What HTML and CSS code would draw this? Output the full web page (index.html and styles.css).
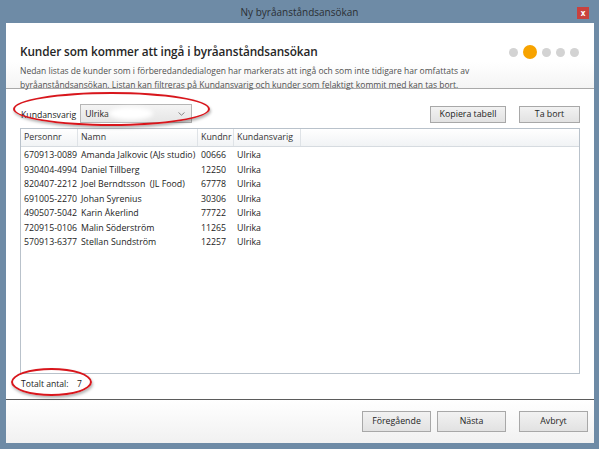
FILE: index.html
```html
<!DOCTYPE html>
<html>
	<head>
		<meta charset="utf-8" />
		<title>Ny byråanståndsansökan</title>
		<link rel="stylesheet" href="styles.css">
	</head>
	<body>
		<div class="window">
			<div class="titlebar">
				<div class="title">Ny byråanståndsansökan</div>
				<div class="close-button">x</div>
			</div>
			<div class="client">
				<div class="header">
					<div class="header-text">
						<h1 class="heading">Kunder som kommer att ingå i byråanståndsansökan</h1>
						<p class="description">Nedan listas de kunder som i förberedandedialogen har markerats att ingå och som inte tidigare har omfattats av<br>byråanståndsansökan. Listan kan filtreras på Kundansvarig och kunder som felaktigt kommit med kan tas bort.</p>
					</div>
					<div class="steps">
						<span class="dot"></span>
						<span class="dot active"></span>
						<span class="dot"></span>
						<span class="dot"></span>
						<span class="dot"></span>
					</div>
				</div>
				<div class="content">
					<div class="toolbar">
						<div class="filter">
							<span class="filter-label">Kundansvarig</span>
							<div class="combobox">
								<span class="combo-text">Ulrika</span>
								<span class="blur-patch"></span>
								<svg class="combo-arrow" width="7" height="4" viewBox="0 0 7 4"><path d="M0.5 0.5 L3.5 3.2 L6.5 0.5" fill="none" stroke="#888" stroke-width="1"/></svg>
							</div>
							<span class="mark mark-filter"></span>
						</div>
						<div class="spacer"></div>
						<div class="buttons wide">Kopiera tabell</div>
						<div class="buttons">Ta bort</div>
					</div>
					<div class="grid">
						<div class="grid-head">
							<div class="col c1">Personnr</div>
							<div class="col c2">Namn</div>
							<div class="col c3">Kundnr</div>
							<div class="col c4">Kundansvarig</div>
						</div>
						<div class="grid-rows">
							<div class="row"><span class="c1">670913-0089</span><span class="c2">Amanda Jalkovic (AJs studio)</span><span class="c3">00666</span><span class="c4">Ulrika</span></div>
							<div class="row"><span class="c1">930404-4994</span><span class="c2">Daniel Tillberg</span><span class="c3">12250</span><span class="c4">Ulrika</span></div>
							<div class="row"><span class="c1">820407-2212</span><span class="c2">Joel Berndtsson &nbsp;(JL Food)</span><span class="c3">67778</span><span class="c4">Ulrika</span></div>
							<div class="row"><span class="c1">691005-2270</span><span class="c2">Johan Syrenius</span><span class="c3">30306</span><span class="c4">Ulrika</span></div>
							<div class="row"><span class="c1">490507-5042</span><span class="c2">Karin Åkerlind</span><span class="c3">77722</span><span class="c4">Ulrika</span></div>
							<div class="row"><span class="c1">720915-0106</span><span class="c2">Malin Söderström</span><span class="c3">11265</span><span class="c4">Ulrika</span></div>
							<div class="row"><span class="c1">570913-6377</span><span class="c2">Stellan Sundström</span><span class="c3">12257</span><span class="c4">Ulrika</span></div>
						</div>
					</div>
					<div class="total">
						<span class="total-label">Totalt antal:</span>
						<span class="total-value">7</span>
						<span class="mark mark-total"></span>
					</div>
				</div>
				<div class="footer">
					<div class="buttons nav">Föregående</div>
					<div class="buttons nav">Nästa</div>
					<div class="buttons nav last">Avbryt</div>
				</div>
			</div>
		</div>
	</body>
</html>
```
FILE: styles.css
```css
body {
	margin: 0px;
	font-family: "Open Sans", "Liberation Sans", sans-serif;
	background-color: #6e8ba6;
	overflow: hidden;
}

.window {
	display: flex;
	flex-direction: column;
	width: 599px;
	height: 449px;
}

.titlebar {
	position: relative;
	height: 23px;
	display: flex;
	align-items: center;
	justify-content: center;
	flex-shrink: 0;
}

.title {
	font-size: 10px;
	color: #2b2f33;
	padding-top: 1px;
}

.close-button {
	position: absolute;
	top: 7px;
	right: 10px;
	width: 12px;
	height: 12px;
	background-color: #c9413e;
	color: white;
	font-size: 8px;
	font-weight: bold;
	line-height: 11px;
	text-align: center;
}

.client {
	flex: 1;
	margin: 0px 5px 6px 6px;
	background-color: white;
	display: flex;
	flex-direction: column;
}

.header {
	height: 65px;
	display: flex;
	padding: 0px 14px 0px 14px;
	border-bottom: 1px solid #a9a9a9;
	background: linear-gradient(#ffffff, #ffffff 60%, #f4f4f4);
}

.header-text {
	flex: 1;
}

.heading {
	font-size: 11.8px;
	font-weight: 600;
	color: #262626;
	margin: 20px 0px 0px 0px;
	letter-spacing: -0.1px;
}

.description {
	font-size: 8.5px;
	line-height: 14px;
	color: #505050;
	margin: 5px 0px 0px 0px;
	white-space: nowrap;
}

.steps {
	display: flex;
	align-items: center;
	gap: 5px;
	height: 14px;
	margin-top: 22px;
	margin-right: 1px;
}

.dot {
	width: 9px;
	height: 9px;
	border-radius: 50%;
	background-color: #d3d3d3;
}

.dot.active {
	width: 14px;
	height: 14px;
	background-color: #f7a300;
}

.content {
	flex: 1;
	display: flex;
	flex-direction: column;
	padding: 0px 14px 0px 14px;
}

.toolbar {
	display: flex;
	align-items: flex-end;
	margin-top: 15px;
	height: 19px;
}

.filter {
	position: relative;
	display: flex;
	align-items: center;
	height: 19px;
}

.filter-label {
	font-size: 8.7px;
	color: #222;
	margin-left: 1px;
	margin-right: 4px;
	padding-top: 2px;
}

.combobox {
	position: relative;
	width: 112px;
	height: 19px;
	border: 1px solid #b6b6b6;
	background: linear-gradient(#f4f4f4, #e6e6e6);
	display: flex;
	align-items: center;
	box-sizing: border-box;
	padding-left: 4px;
}

.combo-text {
	font-size: 8.7px;
	color: #222;
}

.blur-patch {
	position: absolute;
	left: 28px;
	top: 2px;
	width: 44px;
	height: 13px;
	border-radius: 50%;
	background-color: white;
	filter: blur(2px);
}

.combo-arrow {
	position: absolute;
	right: 6px;
	top: 7px;
}

.mark {
	position: absolute;
	border: 2px solid #d8161c;
	border-radius: 50%;
	box-shadow: 1px 2px 3px rgba(0, 0, 0, 0.3);
}

.mark-filter {
	left: -7px;
	top: -12px;
	width: 193px;
	height: 30px;
}

.spacer {
	flex: 1;
}

.buttons {
	height: 17px;
	box-sizing: border-box;
	border: 1px solid #a8a8a8;
	background: linear-gradient(#f2f2f2, #e2e2e2);
	font-size: 8.8px;
	color: #1e1e1e;
	text-align: center;
	line-height: 15px;
	width: 61px;
	margin-left: 13px;
}

.buttons.wide {
	width: 76px;
}

.grid {
	margin-top: 5px;
	height: 246px;
	border: 1px solid #b9c2cb;
	display: flex;
	flex-direction: column;
	box-sizing: border-box;
}

.grid-head {
	display: flex;
	height: 17px;
	background: linear-gradient(#ffffff, #f1f3f5);
	border-bottom: 1px solid #d6dbe0;
	font-size: 8.8px;
	color: #333;
}

.col {
	border-right: 1px solid #dfe3e7;
	line-height: 17px;
	padding-left: 3px;
	box-sizing: border-box;
}

.c1 {
	width: 57px;
	flex-shrink: 0;
}

.c2 {
	width: 120px;
	flex-shrink: 0;
}

.c3 {
	width: 36px;
	flex-shrink: 0;
}

.c4 {
	width: 67px;
	flex-shrink: 0;
}

.grid-rows {
	padding-top: 1px;
	font-size: 8.8px;
	color: #1c1c1c;
}

.row {
	display: flex;
	height: 14.5px;
	line-height: 14.5px;
}

.row span {
	padding-left: 3px;
	box-sizing: border-box;
	white-space: nowrap;
	overflow: hidden;
}

.total {
	position: relative;
	display: flex;
	align-items: center;
	height: 20px;
	font-size: 8.6px;
	color: #222;
	padding-left: 1px;
}

.total-label {
	width: 56px;
}

.mark-total {
	left: -9px;
	top: -6px;
	width: 77px;
	height: 24px;
}

.footer {
	height: 43px;
	border-top: 1px solid #5b5b5b;
	background: linear-gradient(#ffffff, #f1f1f1);
	display: flex;
	align-items: center;
	justify-content: flex-end;
	padding-right: 6px;
}

.buttons.nav {
	width: 69px;
	height: 21px;
	line-height: 19px;
	margin-left: 6px;
}

.buttons.last {
	margin-left: 13px;
}
```
